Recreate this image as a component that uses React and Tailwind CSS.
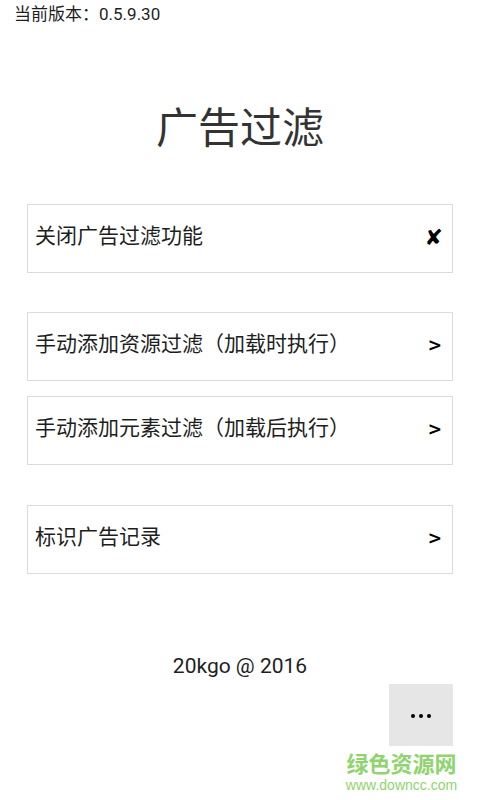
import React from "react";

const font = { fontFamily: 'Roboto, "Noto Sans CJK SC", sans-serif' };

const Row = ({ label, icon }) => (
  <div className="mx-[27px] h-[69px] border border-[#dcdcdc] bg-white flex items-center justify-between pl-[7px] pr-[9px]">
    <span className="text-[21px] text-[#1e1e1e] leading-none pb-[4px]">{label}</span>
    {icon}
  </div>
);

const Chevron = () => (
  <span
    className="text-[17px] font-bold text-black leading-none mr-[1px] pb-[2px]"
    style={{ fontFamily: '"DejaVu Sans", sans-serif' }}
  >
    &gt;
  </span>
);

const Cross = () => (
  <span
    className="text-[22px] text-black leading-none pb-[2px]"
    style={{ fontFamily: '"DejaVu Sans", sans-serif' }}
  >
    ✘
  </span>
);

export default function App() {
  return (
    <div className="relative w-[480px] h-[800px] bg-white overflow-hidden" style={font}>
      {/* version */}
      <div className="pl-[14px] pt-[3px] text-[17px] leading-[22px] text-[#1e1e1e]">
        当前版本：0.5.9.30
      </div>

      {/* title */}
      <h1 className="mt-[78px] text-center text-[42px] leading-[52px] text-[#333] font-normal">
        广告过滤
      </h1>

      <div className="mt-[49px]">
        <Row label="关闭广告过滤功能" icon={<Cross />} />
      </div>
      <div className="mt-[39px] flex flex-col gap-[15px]">
        <Row label="手动添加资源过滤（加载时执行）" icon={<Chevron />} />
        <Row label="手动添加元素过滤（加载后执行）" icon={<Chevron />} />
      </div>
      <div className="mt-[40px]">
        <Row label="标识广告记录" icon={<Chevron />} />
      </div>

      {/* footer */}
      <div className="mt-[78px] text-center text-[21px] leading-[28px] text-[#1e1e1e]">
        20kgo @ 2016
      </div>

      <div className="mt-[4px] flex justify-end pr-[27px]">
        <button className="w-[64px] h-[62px] bg-[#e6e6e6] flex items-center justify-center gap-[4px] pt-[2px]">
          <span className="w-[4px] h-[4px] rounded-full bg-black" />
          <span className="w-[4px] h-[4px] rounded-full bg-black" />
          <span className="w-[4px] h-[4px] rounded-full bg-black" />
        </button>
      </div>

      {/* watermark */}
      <div className="absolute left-[345px] top-[751px] w-[113px] flex flex-col items-center gap-[5px] pointer-events-none">
        <span
          className="text-[22px] leading-none font-bold text-[#8fd46e]"
          style={{ fontFamily: '"Noto Sans CJK SC", sans-serif' }}
        >
          绿色资源网
        </span>
        <span
          className="text-[14px] leading-none text-[#8fd46e]"
          style={{ fontFamily: '"Liberation Sans", sans-serif' }}
        >
          www.downcc.com
        </span>
      </div>
    </div>
  );
}
